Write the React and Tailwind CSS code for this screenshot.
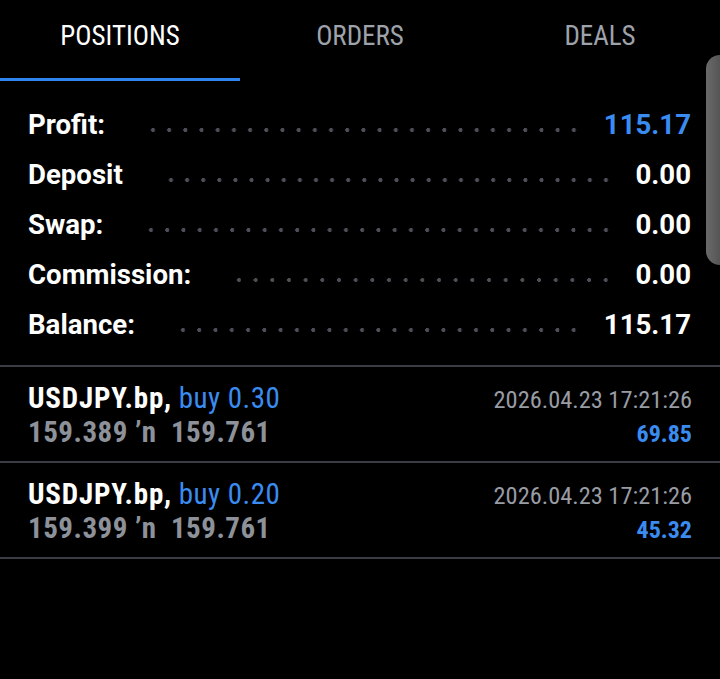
import React from "react";

const tabs = ["POSITIONS", "ORDERS", "DEALS"];

const summary = [
  { label: "Profit:", value: "115.17", blue: true },
  { label: "Deposit", value: "0.00" },
  { label: "Swap:", value: "0.00" },
  { label: "Commission:", value: "0.00" },
  { label: "Balance:", value: "115.17" },
];

const positions = [
  { symbol: "USDJPY.bp,", side: "buy 0.30", open: "159.389", current: "159.761", time: "2026.04.23 17:21:26", profit: "69.85" },
  { symbol: "USDJPY.bp,", side: "buy 0.20", open: "159.399", current: "159.761", time: "2026.04.23 17:21:26", profit: "45.32" },
];

export default function App() {
  return (
    <div className="relative w-[720px] h-[679px] bg-black overflow-hidden font-['Roboto',sans-serif]">
      {/* Tabs */}
      <div className="flex h-[81px] font-stretch-condensed">
        {tabs.map((t, i) => (
          <div key={t} className="relative flex-1 flex justify-center pt-[20px]">
            <span className={`text-[27px] leading-[32px] ${i === 0 ? "text-white" : "text-[#9ea2aa]"}`}>{t}</span>
            {i === 0 && <div className="absolute left-0 right-0 bottom-0 h-[3px] bg-[#2f84ee]" />}
          </div>
        ))}
      </div>

      {/* Summary */}
      <div className="pt-[19px] pb-[15px] pl-[28px] pr-[29px] border-b-2 border-[#3a3d43]">
        {summary.map((row) => (
          <div key={row.label} className="flex items-center h-[50px]">
            <span className="text-white font-bold text-[27.6px] leading-none">{row.label}</span>
            <div className="flex-1 h-[4px] mt-[10px] ml-[40px] mr-[22px] bg-[radial-gradient(circle,#4d5058_1.8px,transparent_2.2px)] bg-[length:16px_4px] bg-repeat-space" />
            <span className={`font-bold text-[27.6px] leading-none ${row.blue ? "text-[#3a8cf0]" : "text-white"}`}>{row.value}</span>
          </div>
        ))}
      </div>

      {/* Positions */}
      {positions.map((p, i) => (
        <div key={i} className="px-[28px] pt-[14px] pb-[12px] border-b-2 border-[#3a3d43] font-stretch-condensed">
          <div className="flex justify-between items-baseline h-[34px]">
            <div className="text-[29px] leading-[34px]">
              <span className="text-white font-bold tracking-[0.8px]">{p.symbol}</span>{" "}
              <span className="text-[#3a8cf0] tracking-[0.5px]">{p.side}</span>
            </div>
            <span className="text-[24.4px] text-[#989ca4]">{p.time}</span>
          </div>
          <div className="flex justify-between items-baseline h-[34px]">
            <div className="text-[29px] leading-[34px] font-bold text-[#8d9199] whitespace-pre tracking-[0.5px]">
              {p.open + " ʼn  " + p.current}
            </div>
            <span className="text-[24px] font-bold text-[#3a8cf0]">{p.profit}</span>
          </div>
        </div>
      ))}

      {/* Scroll handle */}
      <div className="absolute right-0 top-[55px] w-[14px] h-[210px] rounded-l-[14px] bg-gradient-to-r from-[#6a6a6a] to-[#555555]" />
    </div>
  );
}
